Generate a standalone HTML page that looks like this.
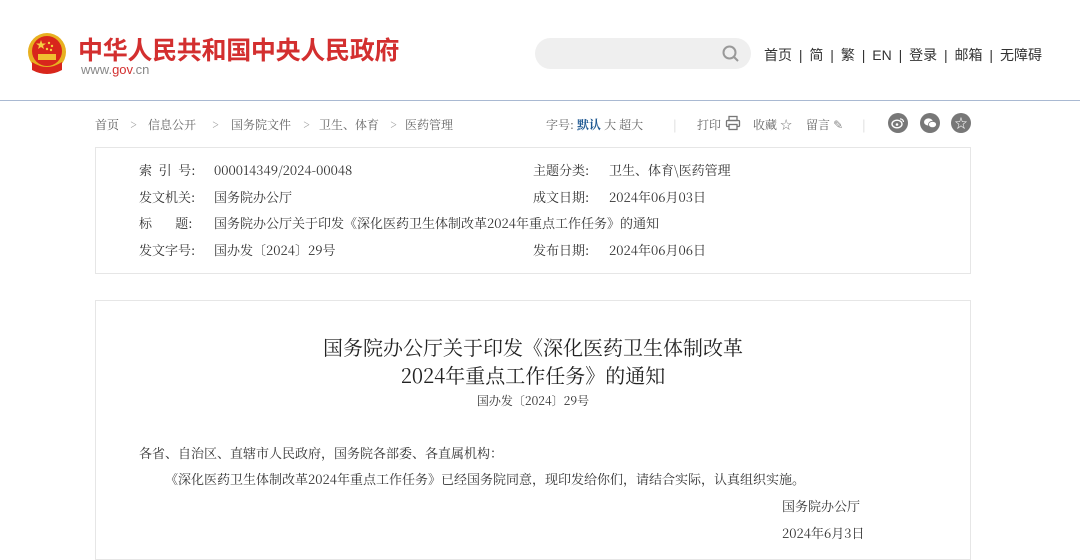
<!DOCTYPE html>
<html><head><meta charset="utf-8"><style>
*{margin:0;padding:0;box-sizing:border-box}
body{width:1080px;height:551px;overflow:hidden;background:#fff;position:relative;font-family:"Noto Serif CJK SC","Liberation Serif",serif;color:#333}
.a{position:absolute;white-space:nowrap}
.sans{font-family:"Liberation Sans","Noto Sans CJK SC",sans-serif}
.box{position:absolute;border:1px solid #e6e6e6;background:#fff}
.bc{position:absolute;top:116px;font-size:12px;color:#666;font-family:"Noto Serif CJK SC",serif}
</style></head><body>
<svg class="a" style="left:26px;top:32px" width="42" height="46" viewBox="0 0 42 46">
<circle cx="21" cy="20" r="19" fill="#e8b020"/>
<circle cx="21" cy="19" r="15" fill="#d8261c"/>
<polygon points="15,8 16.2,11.5 20,11.5 17,13.7 18,17 15,15 12,17 13,13.7 10,11.5 13.8,11.5" fill="#f5d040"/>
<circle cx="23" cy="11" r="1.2" fill="#f5d040"/><circle cx="26" cy="14" r="1.2" fill="#f5d040"/><circle cx="21" cy="17" r="1.2" fill="#f5d040"/><circle cx="25" cy="18" r="1.2" fill="#f5d040"/>
<rect x="12" y="22" width="18" height="6" fill="#f0c030"/>
<path d="M6 30 Q21 40 36 30 L36 38 Q21 46 6 38Z" fill="#d8261c"/>
</svg>
<div class="a sans" style="left:78px;top:31px;font-size:25px;font-weight:bold;color:#d32f2f;letter-spacing:-0.3px">中华人民共和国中央人民政府</div>
<div class="a sans" style="left:81px;top:62px;font-size:13px;color:#888">www.<span style="color:#d32f2f">gov</span>.cn</div>
<div class="a" style="left:535px;top:38px;width:216px;height:31px;border-radius:16px;background:#efefef"></div>
<svg class="a" style="left:721px;top:44px" width="20" height="20" viewBox="0 0 20 20"><circle cx="8.5" cy="8.5" r="6" fill="none" stroke="#999" stroke-width="2"/><line x1="13" y1="13" x2="17" y2="17" stroke="#999" stroke-width="2"/></svg>
<div class="a sans" style="left:764px;top:45px;font-size:14px;color:#333;word-spacing:3px">首页 | 简 | 繁 | EN | 登录 | 邮箱 | 无障碍</div>
<div class="a" style="left:0;top:100px;width:1080px;height:1px;background:#a9b9d2"></div>

<div class="bc" style="left:95px;color:#555">首页</div>
<div class="bc" style="left:130px;color:#999">&gt;</div>
<div class="bc" style="left:148px">信息公开</div>
<div class="bc" style="left:212px;color:#999">&gt;</div>
<div class="bc" style="left:231px">国务院文件</div>
<div class="bc" style="left:303px;color:#999">&gt;</div>
<div class="bc" style="left:319px">卫生、体育</div>
<div class="bc" style="left:390px;color:#999">&gt;</div>
<div class="bc" style="left:405px">医药管理</div>

<div class="bc" style="left:546px">字号: <b style="color:#1d5791">默认</b> 大 超大</div>
<div class="bc" style="left:673px;color:#ccc">|</div>
<div class="bc" style="left:697px">打印</div>
<svg class="a" style="left:725px;top:115px" width="16" height="16" viewBox="0 0 16 16"><rect x="4" y="1.5" width="8" height="4" fill="none" stroke="#777" stroke-width="1.3"/><rect x="1.5" y="5.5" width="13" height="6" rx="1" fill="none" stroke="#777" stroke-width="1.3"/><rect x="4" y="9.5" width="8" height="5" fill="#fff" stroke="#777" stroke-width="1.3"/></svg>
<div class="bc" style="left:753px">收藏 <span style="color:#888">☆</span></div>
<div class="bc" style="left:806px">留言 <span style="color:#888">✎</span></div>
<div class="bc" style="left:862px;color:#ccc">|</div>
<div class="a" style="left:888px;top:113px;width:20px;height:20px;border-radius:50%;background:#777"></div>
<svg class="a" style="left:891px;top:117px" width="14" height="12" viewBox="0 0 14 12"><ellipse cx="6" cy="7" rx="5" ry="3.8" fill="none" stroke="#fff" stroke-width="1.4"/><circle cx="6" cy="7.5" r="1.3" fill="#fff"/><path d="M9 2 A3 3 0 0 1 12.5 5" stroke="#fff" fill="none" stroke-width="1.2"/></svg>
<div class="a" style="left:920px;top:113px;width:20px;height:20px;border-radius:50%;background:#777"></div>
<svg class="a" style="left:923px;top:117px" width="14" height="12" viewBox="0 0 14 12"><ellipse cx="5.5" cy="5" rx="4.5" ry="3.6" fill="#fff"/><ellipse cx="9.5" cy="7.5" rx="4" ry="3.2" fill="#fff" stroke="#777" stroke-width="0.8"/></svg>
<div class="a" style="left:951px;top:113px;width:20px;height:20px;border-radius:50%;background:#777;color:#fff;font-size:13px;text-align:center;line-height:20px">☆</div>

<div class="box" style="left:95px;top:147px;width:876px;height:127px"></div>
<div class="a" style="left:139px;top:157px;font-size:13px;line-height:26.5px;color:#333">索&nbsp;&nbsp;引&nbsp;&nbsp;号:<br>发文机关:<br>标&nbsp;&nbsp;&nbsp;&nbsp;&nbsp;&nbsp;&nbsp;题:<br>发文字号:</div>
<div class="a" style="left:214px;top:157px;font-size:13px;line-height:26.5px;color:#333">000014349/2024-00048<br>国务院办公厅<br>国务院办公厅关于印发《深化医药卫生体制改革2024年重点工作任务》的通知<br>国办发〔2024〕29号</div>
<div class="a" style="left:533px;top:157px;font-size:13px;line-height:26.5px;color:#333">主题分类:<br>成文日期:<br><br>发布日期:</div>
<div class="a" style="left:609px;top:157px;font-size:13px;line-height:26.5px;color:#333">卫生、体育\医药管理<br>2024年06月03日<br><br>2024年06月06日</div>

<div class="box" style="left:95px;top:300px;width:876px;height:260px"></div>
<div class="a" style="left:95px;top:333px;width:876px;text-align:center;font-size:20px;line-height:28px;color:#222">国务院办公厅关于印发《深化医药卫生体制改革<br>2024年重点工作任务》的通知</div>
<div class="a" style="left:95px;top:392px;width:876px;text-align:center;font-size:12px;color:#333">国办发〔2024〕29号</div>
<div class="a" style="left:139px;top:443px;font-size:13px;color:#333">各省、自治区、直辖市人民政府，国务院各部委、各直属机构：</div>
<div class="a" style="left:165px;top:469px;font-size:13px;color:#333">《深化医药卫生体制改革2024年重点工作任务》已经国务院同意，现印发给你们，请结合实际，认真组织实施。</div>
<div class="a" style="left:782px;top:496px;font-size:13px;color:#333">国务院办公厅</div>
<div class="a" style="left:782px;top:523px;font-size:13px;color:#333">2024年6月3日</div>
</body></html>
